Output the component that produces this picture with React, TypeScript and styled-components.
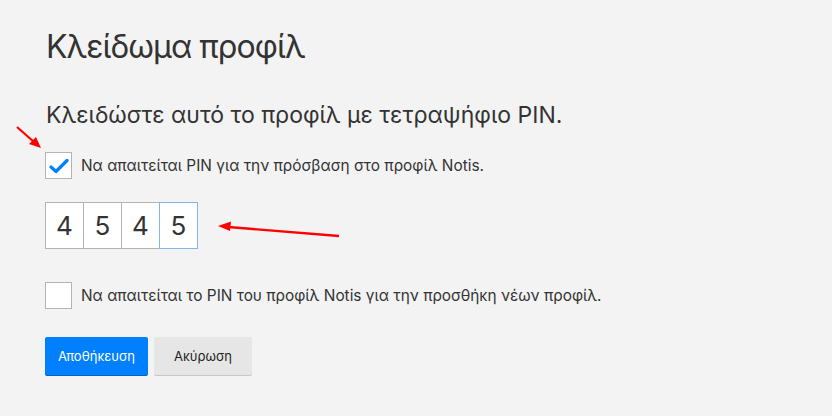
import React from "react";
import styled, { createGlobalStyle } from "styled-components";

const Global = createGlobalStyle`
  html, body { margin: 0; padding: 0; background: #f3f3f3; }
  body { font-family: Inter, "Noto Sans", sans-serif; color: #333; }
`;

const Page = styled.div`
  position: relative;
  width: 832px;
  height: 416px;
  box-sizing: border-box;
  padding: 27px 45px 0 45px;
  overflow: hidden;
`;

const Title = styled.h1`
  margin: 0;
  font-size: 32px;
  font-weight: 400;
  letter-spacing: -0.9px;
  line-height: 40px;
  padding-left: 1px;
  color: #333;
`;

const Subtitle = styled.h2`
  margin: 33px 0 0 0;
  font-size: 23px;
  font-weight: 400;
  line-height: 30px;
  padding-left: 1px;
  color: #333;
`;

const CheckRow = styled.label<{ $mt: number }>`
  display: flex;
  align-items: center;
  gap: 9px;
  margin-top: ${(p) => p.$mt}px;
  font-size: 15.4px;
  color: #333;
`;

const Box = styled.span`
  width: 25px;
  height: 25px;
  border: 1px solid #b3b3b3;
  background: #fff;
  display: flex;
  align-items: center;
  justify-content: center;
  flex-shrink: 0;
`;

const PinRow = styled.div`
  display: flex;
  margin-top: 23px;
`;

const PinCell = styled.div<{ $active?: boolean }>`
  width: 37px;
  height: 45px;
  background: #fff;
  border: 1px solid ${(p) => (p.$active ? "#80b6ea" : "#b3b3b3")};
  margin-left: -1px;
  &:first-child { margin-left: 0; }
  position: relative;
  z-index: ${(p) => (p.$active ? 1 : 0)};
  display: flex;
  align-items: center;
  justify-content: center;
  font-size: 26px;
  color: #333;
`;

const Buttons = styled.div`
  display: flex;
  gap: 6px;
  margin-top: 28px;
`;

const Button = styled.button<{ $primary?: boolean }>`
  height: 38px;
  width: ${(p) => (p.$primary ? 103 : 98)}px;
  padding: 0;
  border: none;
  border-radius: 2px;
  font-family: Inter, "Noto Sans", sans-serif;
  font-size: 13px;
  background: ${(p) => (p.$primary ? "#0080ff" : "#e6e6e6")};
  color: ${(p) => (p.$primary ? "#fff" : "#222")};
  box-shadow: 0 1px 0 ${(p) => (p.$primary ? "#0060c0" : "#c8c8c8")};
`;

const Arrows = styled.svg`
  position: absolute;
  left: 0;
  top: 0;
  pointer-events: none;
`;

export default function App() {
  return (
    <Page>
      <Global />
      <Title>Κλείδωμα προφίλ</Title>
      <Subtitle>Κλειδώστε αυτό το προφίλ με τετραψήφιο PIN.</Subtitle>
      <CheckRow $mt={22}>
        <Box>
          <svg width="20" height="16" viewBox="0 0 20 16">
            <path d="M2 9 L7 13.5 L18 2.5" fill="none" stroke="#0080ff" strokeWidth="3.2" strokeLinecap="round" strokeLinejoin="round" />
          </svg>
        </Box>
        <span>Να απαιτείται PIN για την πρόσβαση στο προφίλ Notis.</span>
      </CheckRow>
      <PinRow>
        <PinCell>4</PinCell>
        <PinCell>5</PinCell>
        <PinCell>4</PinCell>
        <PinCell $active>5</PinCell>
      </PinRow>
      <CheckRow $mt={33}>
        <Box />
        <span>Να απαιτείται το PIN του προφίλ Notis για την προσθήκη νέων προφίλ.</span>
      </CheckRow>
      <Buttons>
        <Button $primary>Αποθήκευση</Button>
        <Button>Ακύρωση</Button>
      </Buttons>
      <Arrows width="832" height="416" viewBox="0 0 832 416">
        <line x1="17" y1="127" x2="34" y2="142" stroke="#ff0000" strokeWidth="2.2" />
        <polygon points="41,148 29,144 36,137" fill="#ff0000" />
        <line x1="339" y1="236" x2="228" y2="227" stroke="#ff0000" strokeWidth="2.4" />
        <polygon points="218,226 231,221.5 230,231" fill="#ff0000" />
      </Arrows>
    </Page>
  );
}
